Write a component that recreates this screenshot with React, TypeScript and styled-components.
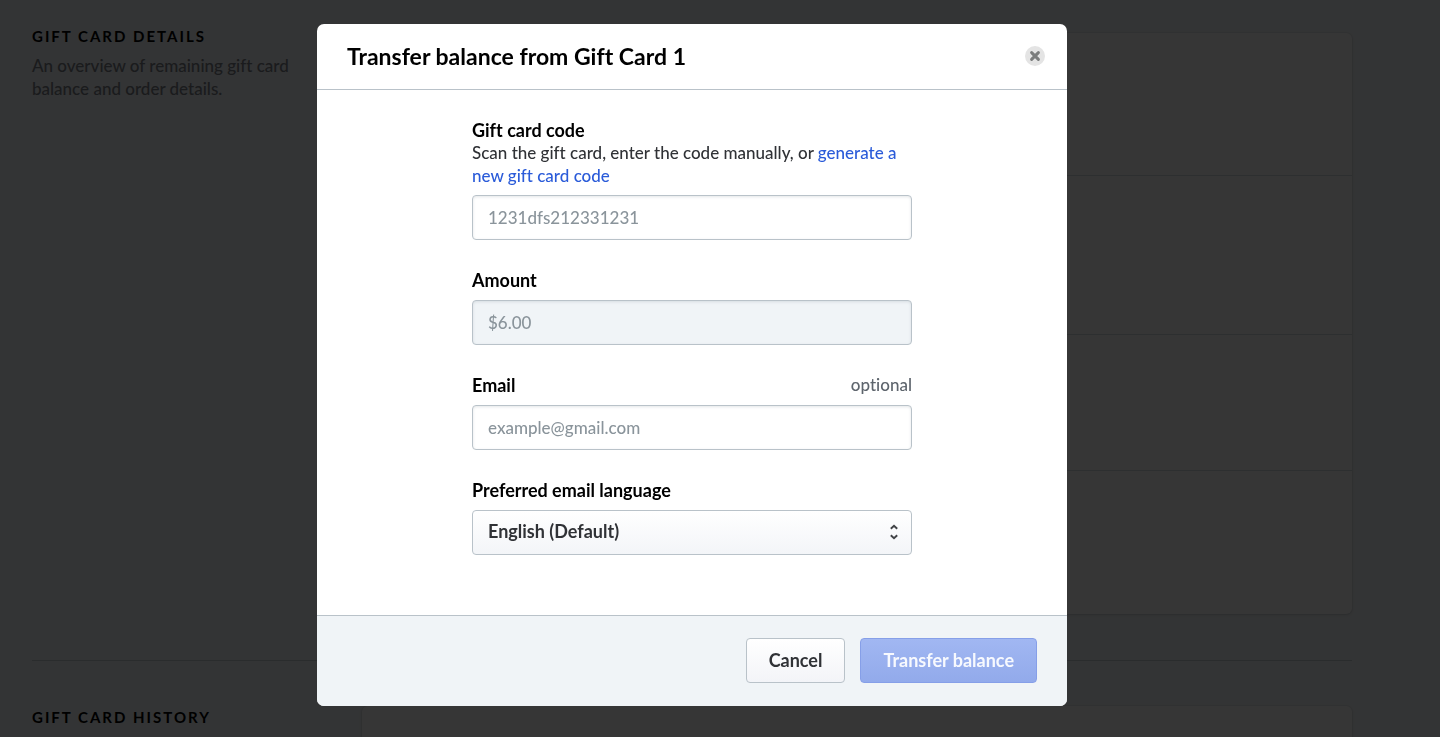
import React from "react";
import styled, { createGlobalStyle } from "styled-components";

const GlobalStyle = createGlobalStyle`
  *, *::before, *::after { box-sizing: border-box; }
  body {
    margin: 0;
    overflow: hidden;
    background: #f0f4f7;
    color: #303236;
    font-family: Lato, "Liberation Sans", sans-serif;
    font-size: 17px;
    font-weight: 500;
    line-height: 23px;
    font-variant-ligatures: no-common-ligatures;
  }
  h1, h2, p { margin: 0; }
  button, input, select { font: inherit; font-variant-ligatures: inherit; }
`;

const Page = styled.main`
  max-width: 1384px;
  padding: 0 32px;
`;

const Section = styled.section<{ $first?: boolean }>`
  display: grid;
  grid-template-columns: 1fr 3fr;
  padding: ${(p) => (p.$first ? "25px 0 46px" : "45px 0")};
  border-bottom: 1px solid #c4cdd5;
`;

const Intro = styled.div`
  padding-right: 32px;
`;

const SectionTitle = styled.h2`
  color: #000;
  font-size: 15px;
  font-weight: 700;
  line-height: 23px;
  letter-spacing: 2px;
  text-transform: uppercase;
`;

const SectionText = styled.p`
  margin-top: 6px;
  color: #7c8087;
`;

const Card = styled.div<{ $inset?: boolean }>`
  margin-top: ${(p) => (p.$inset ? "8px" : "0")};
  border-radius: 6px;
  background: #fff;
  box-shadow: 0 0 0 1px rgba(63, 63, 68, 0.05), 0 1px 3px rgba(63, 63, 68, 0.15);
`;

const CardRow = styled.div<{ $height: number }>`
  min-height: ${(p) => p.$height}px;
  & + & {
    border-top: 1px solid #d5dbe0;
  }
`;

const Overlay = styled.div`
  position: fixed;
  inset: 0;
  overflow: auto;
  background: rgba(0, 0, 0, 0.79);
`;

const DialogArea = styled.div`
  display: flex;
  justify-content: center;
  max-width: 1384px;
  padding: 24px 32px;
`;

const Dialog = styled.div`
  width: 100%;
  max-width: 750px;
  border-radius: 7px;
  overflow: hidden;
  background: #fff;
`;

const DialogHeader = styled.header`
  display: flex;
  align-items: center;
  justify-content: space-between;
  padding: 16px 22px 17px 30px;
  border-bottom: 1px solid #b9c2c9;
`;

const DialogTitle = styled.h1`
  color: #000;
  font-size: 23px;
  font-weight: 700;
  line-height: 32px;
`;

const CloseButton = styled.button`
  display: flex;
  align-items: center;
  justify-content: center;
  width: 20px;
  height: 20px;
  padding: 0;
  border: 0;
  border-radius: 50%;
  background: #e4e4e4;
  color: #7b7d7d;
  cursor: pointer;
`;

const Form = styled.form`
  display: flex;
  flex-direction: column;
  gap: 29px;
  max-width: 440px;
  margin: 0 auto;
  padding: 29px 0 60px;
`;

const Field = styled.div`
  display: flex;
  flex-direction: column;
`;

const LabelRow = styled.div<{ $tight?: boolean }>`
  display: flex;
  justify-content: space-between;
  margin-bottom: ${(p) => (p.$tight ? "0" : "9px")};
  line-height: 22px;
`;

const Label = styled.label`
  color: #000;
  font-size: 18px;
  font-weight: 700;
`;

const Optional = styled.span`
  color: #5e656d;
`;

const Help = styled.p`
  margin-bottom: 8px;
`;

const Link = styled.a`
  color: #2a5bd9;
  text-decoration: none;
`;

const Input = styled.input`
  width: 100%;
  height: 45px;
  padding: 0 15px;
  border: 1px solid #b9c2c9;
  border-radius: 4px;
  background: #fff;
  box-shadow: inset 0 1px 3px rgba(99, 115, 129, 0.18);
  color: #303236;
  &::placeholder {
    color: #8a949b;
    opacity: 1;
  }
  &:disabled {
    background: #f0f4f7;
  }
`;

const SelectWrap = styled.div`
  position: relative;
`;

const Select = styled.select`
  appearance: none;
  width: 100%;
  height: 45px;
  padding: 0 40px 2px 15px;
  border: 1px solid #b9c2c9;
  border-radius: 4px;
  background: linear-gradient(#fff, #f3f5f8);
  color: #303236;
  font-size: 18px;
  font-weight: 700;
`;

const SelectArrows = styled.svg`
  position: absolute;
  top: 14px;
  right: 13px;
  pointer-events: none;
`;

const DialogFooter = styled.footer`
  display: flex;
  justify-content: flex-end;
  gap: 15px;
  padding: 22px 30px 23px;
  border-top: 1px solid #b9c2c9;
  background: #f0f4f7;
`;

const Button = styled.button<{ $primary?: boolean }>`
  height: 45px;
  padding: 0 22px;
  border: 1px solid ${(p) => (p.$primary ? "#869fe8" : "#b9c2c9")};
  border-radius: 4px;
  background: ${(p) =>
    p.$primary ? "linear-gradient(#a1b7f2, #92aaeb)" : "linear-gradient(#fff, #f3f4f8)"};
  color: ${(p) => (p.$primary ? "#f7f9fe" : "#303236")};
  font-size: 18px;
  font-weight: 700;
`;

export default function App() {
  return (
    <>
      <GlobalStyle />
      <Page>
        <Section $first>
          <Intro>
            <SectionTitle>Gift card details</SectionTitle>
            <SectionText>An overview of remaining gift card balance and order details.</SectionText>
          </Intro>
          <Card $inset>
            <CardRow $height={142} />
            <CardRow $height={159} />
            <CardRow $height={136} />
            <CardRow $height={144} />
          </Card>
        </Section>
        <Section>
          <Intro>
            <SectionTitle>Gift card history</SectionTitle>
          </Intro>
          <Card>
            <CardRow $height={240} />
          </Card>
        </Section>
      </Page>
      <Overlay>
        <DialogArea>
          <Dialog role="dialog" aria-modal="true" aria-labelledby="dialog-title">
            <DialogHeader>
              <DialogTitle id="dialog-title">Transfer balance from Gift Card 1</DialogTitle>
              <CloseButton type="button" aria-label="Close">
                <svg width="12" height="12" viewBox="0 0 12 12" fill="none" stroke="currentColor" strokeWidth="3" strokeLinecap="round">
                  <path d="M2.600 2.600 9.400 9.400M9.400 2.600 2.600 9.400" />
                </svg>
              </CloseButton>
            </DialogHeader>
            <Form id="transfer-form">
              <Field>
                <LabelRow $tight>
                  <Label htmlFor="code">Gift card code</Label>
                </LabelRow>
                <Help>
                  Scan the gift card, enter the code manually, or{" "}
                  <Link href="#generate">generate a new gift card code</Link>
                </Help>
                <Input id="code" type="text" placeholder="1231dfs212331231" />
              </Field>
              <Field>
                <LabelRow>
                  <Label htmlFor="amount">Amount</Label>
                </LabelRow>
                <Input id="amount" type="text" placeholder="$6.00" disabled />
              </Field>
              <Field>
                <LabelRow>
                  <Label htmlFor="email">Email</Label>
                  <Optional>optional</Optional>
                </LabelRow>
                <Input id="email" type="email" placeholder="example@gmail.com" />
              </Field>
              <Field>
                <LabelRow>
                  <Label htmlFor="language">Preferred email language</Label>
                </LabelRow>
                <SelectWrap>
                  <Select id="language" defaultValue="en">
                    <option value="en">English (Default)</option>
                  </Select>
                  <SelectArrows width="10" height="16" viewBox="0 0 10 16" fill="none" stroke="#404346" strokeWidth="1.9" aria-hidden="true">
                    <path d="M1.8 4.800 5 1.800l3.200 3M1.800 11.200 5 14.200l3.200-3" />
                  </SelectArrows>
                </SelectWrap>
              </Field>
            </Form>
            <DialogFooter>
              <Button type="button">Cancel</Button>
              <Button type="submit" form="transfer-form" disabled $primary>
                Transfer balance
              </Button>
            </DialogFooter>
          </Dialog>
        </DialogArea>
      </Overlay>
    </>
  );
}
